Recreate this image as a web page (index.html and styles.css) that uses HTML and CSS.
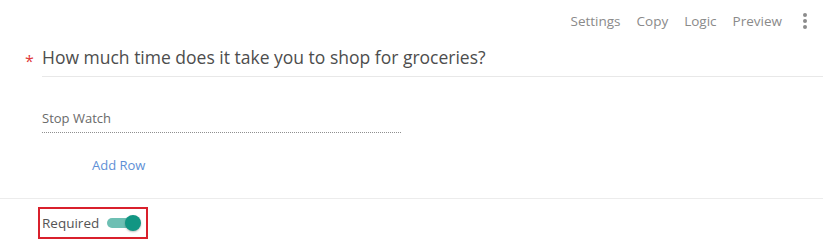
FILE: index.html
```html
<!DOCTYPE html>
<html>
<head>
<meta charset="utf-8">
<link rel="stylesheet" href="styles.css">
</head>
<body>
<div class="card">
  <div class="toolbar">
    <span class="tool">Settings</span>
    <span class="tool">Copy</span>
    <span class="tool">Logic</span>
    <span class="tool">Preview</span>
    <span class="kebab"><i></i><i></i><i></i></span>
  </div>
  <div class="question">
    <span class="star">*</span>
    <div class="title">How much time does it take you to shop for groceries?</div>
  </div>
  <div class="field">Stop Watch</div>
  <div class="addrow">Add Row</div>
  <div class="footer">
    <div class="required">
      <span class="req-label">Required</span>
      <span class="toggle"><span class="knob"></span></span>
    </div>
  </div>
</div>
</body>
</html>
```
FILE: styles.css
```css
html, body {
  margin: 0;
  padding: 0;
  background: #ffffff;
}
body {
  font-family: "Open Sans", "Noto Sans", sans-serif;
  width: 823px;
  height: 244px;
  overflow: hidden;
}
.toolbar {
  display: flex;
  justify-content: flex-end;
  align-items: center;
  height: 42px;
  padding-right: 16px;
  gap: 16px;
  font-size: 13.5px;
  color: #8a8a8a;
}
.kebab {
  display: flex;
  flex-direction: column;
  gap: 2px;
  margin-left: 5px;
  width: 4px;
}
.kebab i {
  display: block;
  width: 4px;
  height: 4px;
  border-radius: 50%;
  background: #8c8c8c;
}
.question {
  display: flex;
  align-items: flex-start;
  padding-left: 25px;
}
.star {
  color: #e03a3a;
  font-size: 16px;
  width: 17px;
  line-height: 34px;
  padding-top: 2px;
}
.title {
  flex: 1;
  font-size: 17.5px;
  color: #4d4d4d;
  line-height: 30px;
  height: 34px;
  border-bottom: 1px solid #e8e8e8;
}
.field {
  margin: 28px 0 0 42px;
  width: 359px;
  font-size: 13px;
  color: #6a6a6a;
  line-height: 24px;
  padding-bottom: 2px;
  border-bottom: 1px dotted #8f8f8f;
}
.addrow {
  margin: 21px 0 0 92px;
  font-size: 13px;
  color: #5e8fd6;
  line-height: 22px;
}
.footer {
  margin-top: 22px;
  border-top: 1px solid #ececec;
  padding: 8px 0 0 38px;
}
.required {
  display: inline-flex;
  align-items: center;
  gap: 8px;
  height: 28px;
  padding: 0 5px 0 2px;
  border: 2px solid #d9202c;
}
.req-label {
  font-size: 13.5px;
  color: #555;
}
.toggle {
  position: relative;
  display: inline-block;
  width: 32px;
  height: 10px;
  border-radius: 5px;
  background: #6dbfb3;
  margin-right: 2px;
}
.knob {
  position: absolute;
  right: -2px;
  top: -3px;
  width: 16px;
  height: 16px;
  border-radius: 50%;
  background: #119683;
  box-shadow: 0 1px 2px rgba(0,0,0,0.25);
}
```
